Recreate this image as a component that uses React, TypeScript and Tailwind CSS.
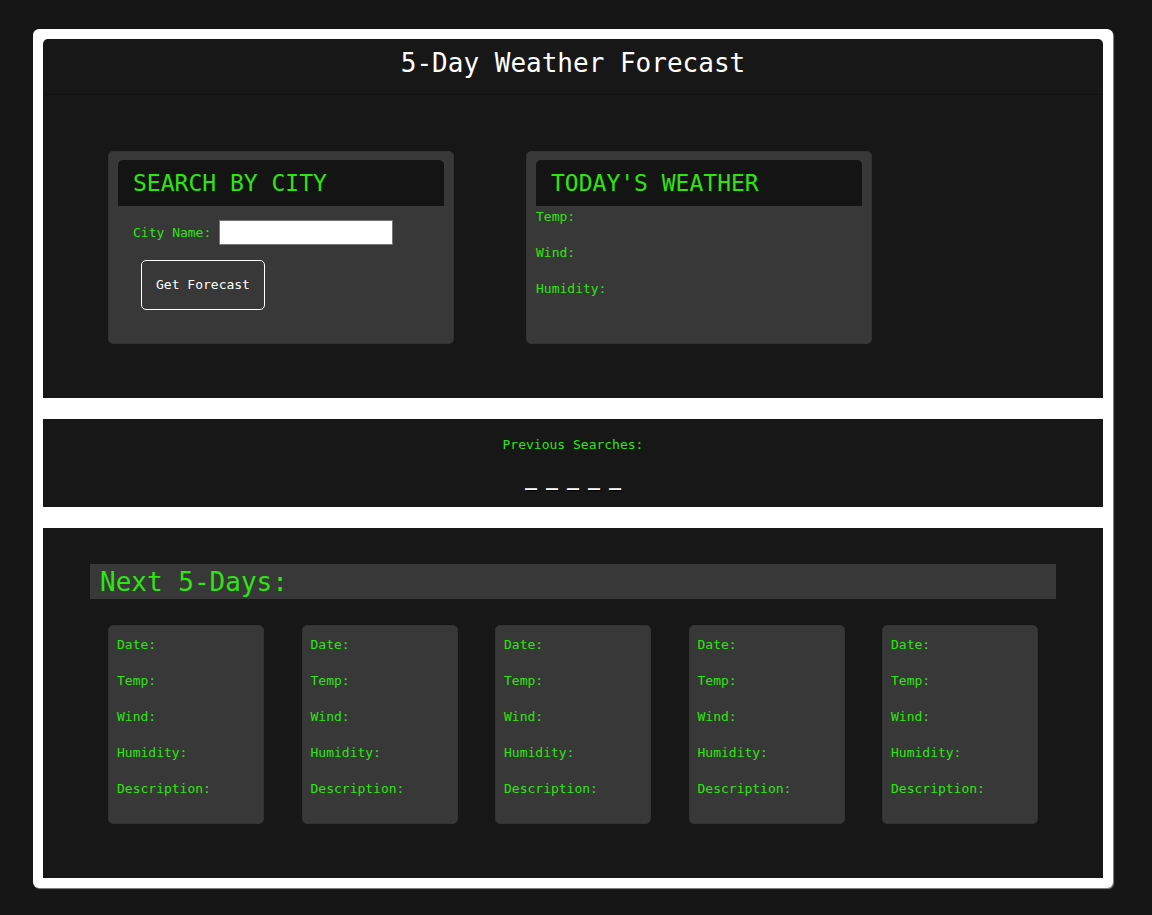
const mono = "font-['DejaVu_Sans_Mono',monospace]";

const todayRows = ['Temp:', 'Wind:', 'Humidity:'];
const dayRows = ['Date:', 'Temp:', 'Wind:', 'Humidity:', 'Description:'];
const days = [1, 2, 3, 4, 5];

function CardHeader({ title }: { title: string }) {
  return (
    <div className="flex h-[46px] items-center rounded-t-[5px] bg-[#141414] px-[15px]">
      <h2 className="text-[23px] leading-none text-[#2ee512]">{title}</h2>
    </div>
  );
}

function DayCard() {
  return (
    <div className="flex h-[199px] w-[156px] flex-col gap-[14px] rounded-[5px] border border-[#333] bg-[#383838] px-[8px] pt-[8px]">
      {dayRows.map((row) => (
        <p key={row} className="text-[13px] leading-[22px] text-[#2ee512]">
          {row}
        </p>
      ))}
    </div>
  );
}

export default function App() {
  return (
    <div className={`min-h-[915px] bg-[#161616] pl-[33px] pt-[29px] ${mono}`}>
      <div className="flex w-[1080px] flex-col gap-[21px] rounded-[6px] bg-white p-[10px] shadow-[1px_1px_1px_#888]">
        {/* top: title + search + today */}
        <section className="h-[359px] rounded-t-[5px] bg-[#171717]">
          <header className="flex h-[56px] items-center justify-center border-b border-[#121212] pb-[8px]">
            <h1 className="text-[26px] leading-none text-white">5-Day Weather Forecast</h1>
          </header>
          <div className="flex gap-[72px] pl-[65px] pt-[56px]">
            <div className="h-[193px] w-[346px] rounded-[5px] border border-[#333] bg-[#383838] px-[9px] pt-[8px]">
              <CardHeader title="SEARCH BY CITY" />
              <div className="mt-[14px] flex items-center gap-[8px] pl-[15px]">
                <label className="text-[13px] text-[#2ee512]">City Name:</label>
                <input
                  type="text"
                  className="h-[25px] w-[174px] border border-[#767676] bg-white px-1 text-[13px] outline-none"
                />
              </div>
              <button className="ml-[23px] mt-[15px] h-[50px] w-[124px] rounded-[5px] border border-white text-[13px] text-white">
                Get Forecast
              </button>
            </div>
            <div className="h-[193px] w-[346px] rounded-[5px] border border-[#333] bg-[#383838] px-[9px] pt-[8px]">
              <CardHeader title="TODAY'S WEATHER" />
              <div className="flex flex-col gap-[14px]">
                {todayRows.map((row) => (
                  <p key={row} className="text-[13px] leading-[22px] text-[#2ee512]">
                    {row}
                  </p>
                ))}
              </div>
            </div>
          </div>
        </section>

        {/* history */}
        <section className="flex h-[88px] flex-col items-center bg-[#171717] pt-[17px]">
          <p className="text-[13px] leading-[18px] text-[#2ee512]">Previous Searches:</p>
          <p className="mt-[12px] pl-[9px] text-[20px] font-bold leading-[24px] tracking-[9px] text-white [text-shadow:1px_1px_1px_#000]">
            _____
          </p>
        </section>

        {/* forecast */}
        <section className="h-[350px] bg-[#171717] pt-[36px]">
          <div className="mx-[47px] flex h-[35px] items-center bg-[#383838] px-[10px]">
            <h2 className="text-[26px] leading-none text-[#2ee512]">Next 5-Days:</h2>
          </div>
          <div className="mt-[26px] flex justify-between px-[65px]">
            {days.map((d) => (
              <DayCard key={d} />
            ))}
          </div>
        </section>
      </div>
    </div>
  );
}
